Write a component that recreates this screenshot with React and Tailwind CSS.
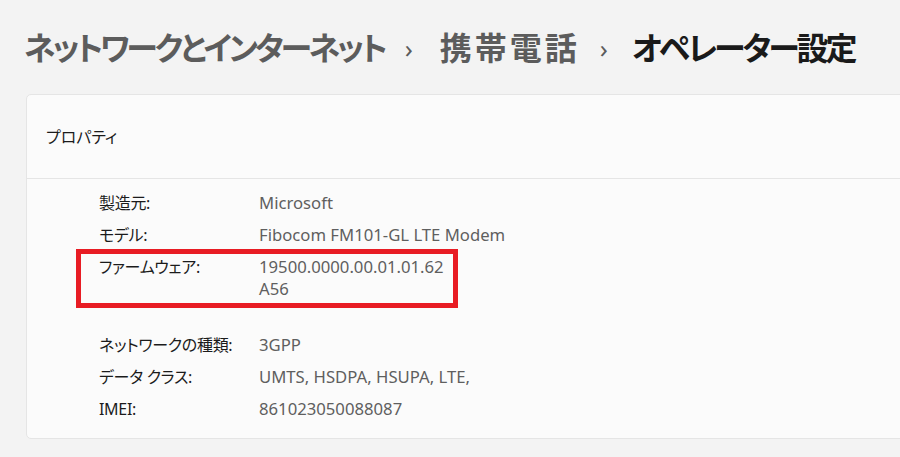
const FONT = "font-['Noto_Sans','Noto_Sans_CJK_JP',sans-serif] [font-feature-settings:'palt']";

const ROWS = [
  { label: "製造元:", value: ["Microsoft"] },
  { label: "モデル:", value: ["Fibocom FM101-GL LTE Modem"] },
  { label: "ファームウェア:", value: ["19500.0000.00.01.01.62", "A56"], marked: true },
  { label: "ネットワークの種類:", value: ["3GPP"], gapBefore: true },
  { label: "データ クラス:", value: ["UMTS, HSDPA, HSUPA, LTE,"] },
  { label: "IMEI:", value: ["861023050088087"] },
];

function Row({ label, value, marked, gapBefore }) {
  return (
    <div className={`relative flex py-[5px] leading-[22px] ${gapBefore ? "mt-[24px]" : ""}`}>
      {marked && (
        <span className="absolute left-[-23px] top-[-2px] w-[382px] h-[59px] border-[5px] border-[#e81c24] pointer-events-none" />
      )}
      <div className="w-[160px] text-[#1b1b1b] tracking-[-0.3px]">{label}</div>
      <div className="text-[#5f5f5f] text-[16.7px]">
        {value.map((v) => (
          <div key={v}>{v}</div>
        ))}
      </div>
    </div>
  );
}

function Chevron({ right = "mr-[27px]" }) {
  return <span className={`text-[#5c5c5c] text-[26px] font-normal ml-[20px] ${right}`}>›</span>;
}

export default function App() {
  return (
    <div className={`w-[900px] h-[457px] bg-[#f3f3f3] overflow-hidden ${FONT}`}>
      {/* Breadcrumb title */}
      <h1 className="h-[94px] flex items-center pl-[24px] pt-[2px] text-[32px] font-semibold whitespace-nowrap">
        <span className="text-[#5c5c5c] tracking-[-3.2px]">ネットワークとインターネット</span>
        <Chevron />
        <span className="text-[#5c5c5c] tracking-[3px]">携帯電話</span>
        <Chevron right="mr-[24px]" />
        <span className="text-[#1a1a1a] tracking-[-3px]">オペレーター設定</span>
      </h1>

      {/* Properties card */}
      <div className="ml-[26px] w-[900px] bg-[#fbfbfb] border border-[#e5e5e5] rounded-[5px] text-[16px]">
        <div className="h-[84px] flex items-center pl-[19px] border-b border-[#e5e5e5] text-[#1b1b1b]">
          プロパティ
        </div>
        <div className="pl-[72px] pt-[8px] pb-[13px]">
          {ROWS.map((r) => (
            <Row key={r.label} {...r} />
          ))}
        </div>
      </div>
    </div>
  );
}
